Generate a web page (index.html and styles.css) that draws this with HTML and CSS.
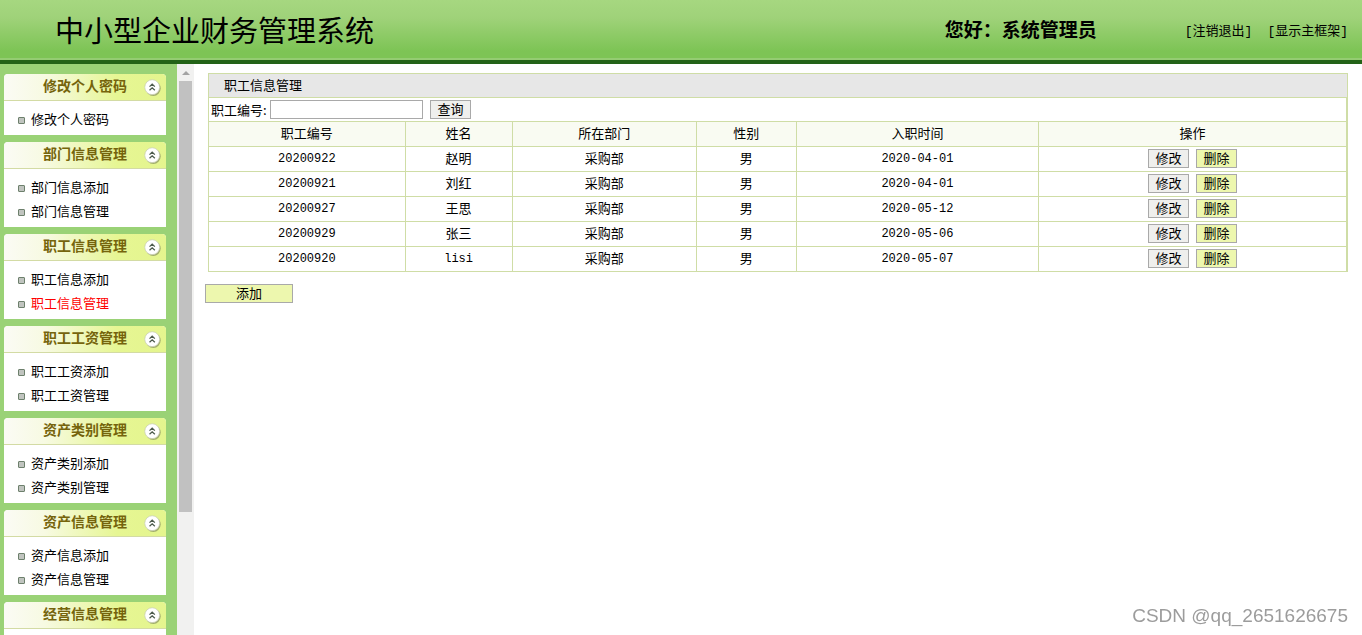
FILE: index.html
```html
<!DOCTYPE html>
<html lang="zh-CN">
<head>
<meta charset="utf-8">
<title>中小型企业财务管理系统</title>
<link rel="stylesheet" href="styles.css">
</head>
<body>
<svg class="defs" aria-hidden="true">
  <symbol id="collapse" viewBox="0 0 16 16">
    <circle cx="8.7" cy="8.9" r="7" fill="#8b9660" opacity=".75"/>
    <circle cx="7.7" cy="7.7" r="7" fill="#fff" stroke="#c9cfb4" stroke-width=".7"/>
    <path d="M5.2 7.2 7.7 4.9 10.2 7.2M5.2 10.6 7.7 8.3 10.2 10.6" fill="none" stroke="#4c5a4c" stroke-width="1.2"/>
  </symbol>
</svg>
<header class="top">
  <h1 class="title">中小型企业财务管理系统</h1>
  <p class="hello">您好：系统管理员</p>
  <nav class="links"><a href="#">[注销退出]</a><a href="#">[显示主框架]</a></nav>
</header>
<div class="frame">
  <aside class="side">
    <nav class="menu">
      <section class="group"><h2>修改个人密码</h2><button class="fold" aria-label="折叠"><svg><use href="#collapse"/></svg></button>
        <ul><li><a href="#">修改个人密码</a></li></ul></section>
      <section class="group"><h2>部门信息管理</h2><button class="fold" aria-label="折叠"><svg><use href="#collapse"/></svg></button>
        <ul><li><a href="#">部门信息添加</a></li><li><a href="#">部门信息管理</a></li></ul></section>
      <section class="group"><h2>职工信息管理</h2><button class="fold" aria-label="折叠"><svg><use href="#collapse"/></svg></button>
        <ul><li><a href="#">职工信息添加</a></li><li><a class="current" href="#">职工信息管理</a></li></ul></section>
      <section class="group"><h2>职工工资管理</h2><button class="fold" aria-label="折叠"><svg><use href="#collapse"/></svg></button>
        <ul><li><a href="#">职工工资添加</a></li><li><a href="#">职工工资管理</a></li></ul></section>
      <section class="group"><h2>资产类别管理</h2><button class="fold" aria-label="折叠"><svg><use href="#collapse"/></svg></button>
        <ul><li><a href="#">资产类别添加</a></li><li><a href="#">资产类别管理</a></li></ul></section>
      <section class="group"><h2>资产信息管理</h2><button class="fold" aria-label="折叠"><svg><use href="#collapse"/></svg></button>
        <ul><li><a href="#">资产信息添加</a></li><li><a href="#">资产信息管理</a></li></ul></section>
      <section class="group"><h2>经营信息管理</h2><button class="fold" aria-label="折叠"><svg><use href="#collapse"/></svg></button>
        <ul></ul></section>
    </nav>
    <div class="scrollbar"><span class="arrow"></span><span class="thumb"></span></div>
  </aside>
  <main class="content">
    <div class="panel">
      <h2 class="caption">职工信息管理</h2>
      <form class="search">
        <label for="no">职工编号:</label><input id="no" type="text"><button class="btn" type="button">查询</button>
      </form>
      <table class="grid">
        <colgroup><col class="c-no"><col class="c-name"><col class="c-dept"><col class="c-sex"><col class="c-date"><col></colgroup>
        <thead><tr><th>职工编号</th><th>姓名</th><th>所在部门</th><th>性别</th><th>入职时间</th><th>操作</th></tr></thead>
        <tbody>
          <tr><td class="num">20200922</td><td>赵明</td><td>采购部</td><td>男</td><td class="num">2020-04-01</td><td><div class="ops"><button class="btn">修改</button><button class="btn lime">删除</button></div></td></tr>
          <tr><td class="num">20200921</td><td>刘红</td><td>采购部</td><td>男</td><td class="num">2020-04-01</td><td><div class="ops"><button class="btn">修改</button><button class="btn lime">删除</button></div></td></tr>
          <tr><td class="num">20200927</td><td>王思</td><td>采购部</td><td>男</td><td class="num">2020-05-12</td><td><div class="ops"><button class="btn">修改</button><button class="btn lime">删除</button></div></td></tr>
          <tr><td class="num">20200929</td><td>张三</td><td>采购部</td><td>男</td><td class="num">2020-05-06</td><td><div class="ops"><button class="btn">修改</button><button class="btn lime">删除</button></div></td></tr>
          <tr><td class="num">20200920</td><td class="num">lisi</td><td>采购部</td><td>男</td><td class="num">2020-05-07</td><td><div class="ops"><button class="btn">修改</button><button class="btn lime">删除</button></div></td></tr>
        </tbody>
      </table>
    </div>
    <button class="btn lime add">添加</button>
  </main>
</div>
<div class="mark">CSDN @qq_2651626675</div>
</body>
</html>
```
FILE: styles.css
```css
*, *::before { box-sizing: border-box; }
body {
  margin: 0;
  height: 100vh;
  overflow: hidden;
  display: flex;
  flex-direction: column;
  background: #fff;
  color: #000;
  font: 13px/20px "Noto Sans CJK SC", sans-serif;
}
h1, h2, p, ul { margin: 0; padding: 0; }
ul { list-style: none; }
a { color: inherit; text-decoration: none; }
.defs { display: none; }

.top {
  flex: none;
  display: flex;
  align-items: center;
  height: 64px;
  padding: 0 14px 2px 55px;
  border-bottom: 4px solid #236317;
  background: linear-gradient(#a6d780, #9fd279 30%, #7dc455 85%, #7dc455 96%, #94cc72 97%);
}
.title { flex: 1; font-size: 29px; font-weight: 400; line-height: 40px; }
.hello { font-size: 19px; font-weight: 700; line-height: 28px; }
.links {
  display: flex;
  gap: 15px;
  margin-left: 88px;
  padding-top: 6px;
  font-family: "Liberation Mono", "Noto Sans CJK SC", monospace;
}

.frame { flex: 1; display: flex; min-height: 0; }
.side { flex: none; display: flex; width: 194px; }
.menu {
  flex: 1;
  display: flex;
  flex-direction: column;
  gap: 7px;
  padding: 10px 11px 0 4px;
  overflow: hidden;
  background: #9ad276;
}
.group {
  flex: none;
  position: relative;
  background: #fff;
  border-radius: 4px 4px 0 0;
}
.group h2 {
  height: 27px;
  padding-left: 39px;
  border-bottom: 1px solid #d3dba4;
  border-radius: 4px 4px 0 0;
  background: linear-gradient(90deg, #fbfbf5, #f7fae2 25%, #e6f693 70%, #e4f58e);
  color: #75640c;
  font-size: 14px;
  line-height: 23px;
}
.group ul { padding: 6px 0 4px 14px; }
.group li { display: flex; align-items: center; gap: 6px; height: 24px; }
.group li::before {
  content: "";
  width: 7px;
  height: 7px;
  margin-top: 2px;
  border: 1px solid #6d806c;
  border-radius: 1px;
  background: #c0c4bf;
}
.fold {
  position: absolute;
  top: 5px;
  right: 5px;
  padding: 0;
  border: 0;
  background: none;
}
.fold svg { display: block; width: 17px; height: 17px; }
.current { color: #f00; }

.scrollbar {
  flex: none;
  display: flex;
  flex-direction: column;
  align-items: center;
  width: 17px;
  background: #f1f1f0;
}
.arrow {
  margin: 7px 0 6px;
  border: 4px solid transparent;
  border-top: 0;
  border-bottom: 4px solid #a3a3a3;
}
.thumb { width: 13px; height: 75.5%; background: #c1c1c1; }

.content { flex: 1; padding: 9px 14px 0 11px; }
.panel { margin-left: 3px; border: 1px solid #cfdda6; }
.caption {
  height: 24px;
  padding-left: 15px;
  border-bottom: 1px solid #cfdda6;
  background: #e7e7e7;
  font-size: 13px;
  font-weight: 400;
  line-height: 21px;
}
.search { display: flex; align-items: center; height: 23px; padding-left: 2px; }
.search label { width: 59px; white-space: nowrap; }
.search input {
  width: 153px;
  height: 19px;
  margin-right: 7px;
  padding: 0 2px;
  border: 1px solid #a9a9a9;
  background: #fff;
  font: inherit;
}
.search, .grid { border-right: 1px solid #cfdda6; }
.btn {
  width: 41px;
  height: 19px;
  padding: 0 0 2px;
  border: 1px solid #a9a9a9;
  background: #efefed;
  color: #000;
  font: 13px/15px "Noto Sans CJK SC", sans-serif;
}
.lime { background: #edf7ae; }
.add { display: block; width: 88px; margin-top: 12px; }

.grid {
  width: 100%;
  table-layout: fixed;
  border-spacing: 0;
  text-align: center;
}
.grid th, .grid td {
  height: 25px;
  padding: 0 0 2px;
  border-top: 1px solid #cfdda6;
  border-right: 1px solid #cfdda6;
}
.grid th:last-child, .grid td:last-child { border-right: 0; }
.grid th { background: #f9fbf2; font-weight: 400; }
.grid .num {
  padding-bottom: 0;
  font-family: "Liberation Mono", monospace;
  font-size: 12px;
}
.c-no { width: 17.3%; }
.c-name { width: 9.4%; }
.c-dept { width: 16.2%; }
.c-sex { width: 8.8%; }
.c-date { width: 21.3%; }
.ops { display: flex; justify-content: center; gap: 7px; }

.mark {
  position: fixed;
  right: 14px;
  bottom: 8px;
  color: #9c9c9c;
  font: 19px/22px "Liberation Sans", sans-serif;
}
```
